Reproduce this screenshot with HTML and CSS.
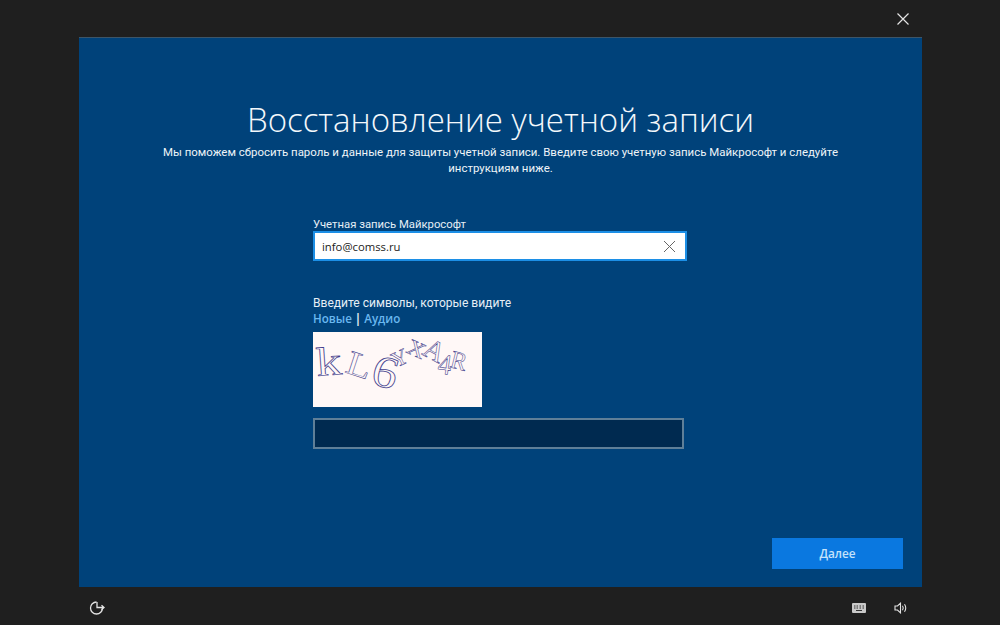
FILE: index.html
```html
<!DOCTYPE html>
<html lang="ru">
<head>
<meta charset="utf-8">
<title>Восстановление учетной записи</title>
<link rel="stylesheet" href="styles.css">
</head>
<body>
<div class="shell">
  <header class="topbar">
    <svg class="close" width="14" height="14" viewBox="0 0 14 14"><path d="M1.5 1.5 12.5 12.5M12.5 1.5 1.5 12.5"/></svg>
  </header>
  <main class="panel">
    <h1 class="title">Восстановление учетной записи</h1>
    <p class="lead">Мы поможем сбросить пароль и данные для защиты учетной записи. Введите свою учетную запись Майкрософт и следуйте инструкциям ниже.</p>
    <form class="form">
      <label class="label">Учетная запись Майкрософт</label>
      <div class="email">
        <span class="email-value">info@comss.ru</span>
        <svg class="clear" width="13" height="13" viewBox="0 0 13 13"><path d="M1 1 12 12M12 1 1 12"/></svg>
      </div>
      <div class="label captcha-label">Введите символы, которые видите</div>
      <div class="links"><span>Новые</span> <b>|</b> <span>Аудио</span></div>
      <svg class="captcha" width="169" height="75" viewBox="0 0 169 75">
        <rect width="169" height="75" fill="#fff8f7"/>
        <g class="captcha-text">
          <text transform="translate(4 44) rotate(-4) scale(1.7 1.35)" font-size="30">k</text>
          <text transform="translate(31 40) rotate(18) scale(1.2 1)" font-size="34">L</text>
          <text transform="translate(56 51) rotate(16) scale(1.7 1.5)" font-size="30">6</text>
          <text transform="translate(83 36) rotate(-26)" font-size="22">Y</text>
          <text transform="translate(92 20) rotate(24) scale(1.15 1)" font-size="22">X</text>
          <text transform="translate(108 22) rotate(28) scale(1.1 1.1)" font-size="26">A</text>
          <text transform="translate(124 41) rotate(8) scale(1.1 1.2)" font-size="24">4</text>
          <text transform="translate(136 35) rotate(14) scale(1.05 1.1)" font-size="23">R</text>
        </g>
      </svg>
      <div class="answer"></div>
    </form>
    <div class="actions"><button class="next" type="button">Далее</button></div>
  </main>
  <footer class="bottombar">
    <svg class="ease" width="18" height="18" viewBox="0 0 18 18"><path d="M8.500 3A6 6 0 1 0 14.500 9"/><path d="M9 3V8.500H16M13.500 6.300 16 8.500 13.500 10.700"/></svg>
    <div class="tray">
      <svg class="kbd" width="14" height="10" viewBox="0 0 14 10"><rect width="14" height="10" rx="1" fill="#c9c9c9"/><path d="M2 3h1.500M4.500 3H6M7.500 3H9M10.500 3H12M2 5h1.500M4.500 5H6M7.500 5H9M10.500 5H12M4 7.500h6"/></svg>
      <svg class="sound" width="14" height="12" viewBox="0 0 14 12"><path d="M1 4H3.500L6.500 1.200V10.800L3.500 8H1Z"/><path d="M8.500 3.800Q10 6 8.500 8.200M10.500 2.200Q13 6 10.500 9.800"/></svg>
    </div>
  </footer>
</div>
</body>
</html>
```
FILE: styles.css
```css
* { box-sizing: border-box; }
html, body { margin: 0; height: 100%; }
body {
  background: #1f1f1f;
  color: #fff;
  font-family: "Open Sans", "Noto Sans", sans-serif;
  overflow: hidden;
}
.shell {
  width: 1000px;
  height: 625px;
  display: flex;
  flex-direction: column;
}
.topbar {
  height: 37px;
  flex: none;
  display: flex;
  justify-content: flex-end;
  padding: 12px 90px 0 0;
}
.close path { stroke: #e4e4e4; stroke-width: 1.2; fill: none; }
.panel {
  height: 550px;
  flex: none;
  margin: 0 78px 0 79px;
  background: #00427a;
  border-top: 1px solid #3d5568;
  display: flex;
  flex-direction: column;
  padding-top: 59px;
}
.title {
  margin: 0;
  font-weight: 300;
  font-size: 33px;
  line-height: 46px;
  text-align: center;
  color: #f4f8fb;
}
.lead {
  margin: 1px auto 0;
  width: 700px;
  font-family: Roboto, "Open Sans", sans-serif;
  font-size: 11.45px;
  line-height: 16px;
  text-align: center;
  color: #eef4f8;
}
.form {
  margin: 42px 0 0 234px;
  width: 375px;
  display: flex;
  flex-direction: column;
}
.label {
  font-family: Roboto, "Open Sans", sans-serif;
  font-size: 11.3px;
  line-height: 13px;
  color: #e6eff6;
}
.email {
  height: 30px;
  width: 374px;
  background: #fff;
  border: 2px solid #1c8fe6;
  display: flex;
  align-items: center;
  justify-content: space-between;
  padding: 0 9px 0 7px;
}
.email-value { font-size: 11.3px; color: #222; }
.clear path { stroke: #666; stroke-width: 1; fill: none; }
.captcha-label { margin-top: 34px; line-height: 16px; font-size: 12.05px; }
.links {
  font-size: 11.6px;
  line-height: 15px;
  font-weight: 600;
  color: #6ab8f0;
}
.links b { color: #e6eff6; font-weight: 700; }
.captcha { display: block; margin-top: 6px; }
.captcha-text text {
  font-family: "Liberation Serif", serif;
  fill: #fff8f7;
  stroke: #3f3d8c;
  stroke-width: .5;
}
.answer {
  margin-top: 11px;
  width: 371px;
  height: 31px;
  background: #002a50;
  border: 2px solid #5f7f98;
}
.actions {
  margin-top: auto;
  display: flex;
  justify-content: flex-end;
  padding: 0 19px 18px 0;
}
.next {
  width: 131px;
  height: 31px;
  border: 0;
  padding: 0 0 2px;
  background: #0a78e0;
  color: #c4e2fb;
  font: 600 11.8px "Open Sans", "Noto Sans", sans-serif;
}
.bottombar {
  flex: 1;
  display: flex;
  justify-content: space-between;
  align-items: center;
  padding: 4px 92px 0 88px;
}
.ease path { stroke: #e4e4e4; stroke-width: 1.300; fill: none; }
.tray { display: flex; align-items: center; gap: 28px; }
.kbd path { stroke: #333; stroke-width: 1; fill: none; }
.sound path { stroke: #e4e4e4; stroke-width: 1.100; fill: none; }
```
